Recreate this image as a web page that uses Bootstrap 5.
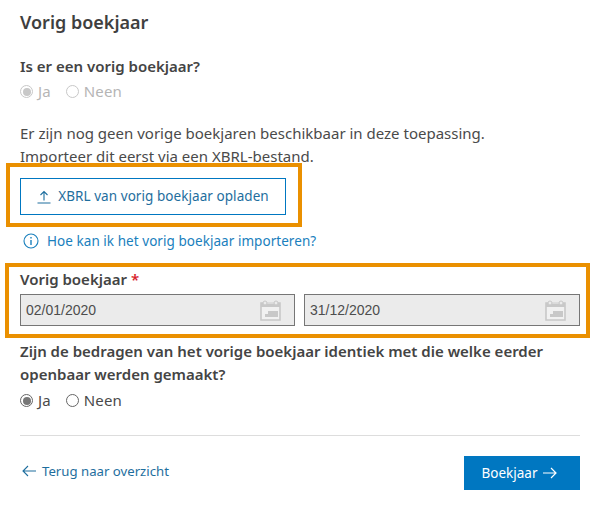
<!DOCTYPE html>
<html lang="nl">
<head>
<meta charset="utf-8">
<title>Vorig boekjaar</title>
<link rel="stylesheet" href="https://cdn.jsdelivr.net/npm/bootstrap@5.3.0/dist/css/bootstrap.min.css">
<style>
html, body { height: 100%; }
body { font-family: "Noto Sans", sans-serif; color: #4a4a4a; background: #fff; font-size: 15px; overflow: hidden; position: relative; }
.page-wrap { width: 560px; margin-left: 20px; padding-top: 10px; }
.page-title { font-size: 18px; font-weight: 600; line-height: 24px; margin: 0 0 21px; color: #3f3f3f; }
.q-label { font-size: 15px; font-weight: 600; line-height: 23px; margin: 0; color: #444; }
.radio-row { height: 25px; gap: 15px; font-size: 15px; line-height: 25px; margin-top: 1px; letter-spacing: .15px; }
.q-block + .radio-row { margin-top: 2px; }
.radio-item { gap: 5px; }
.radio-dot { width: 13px; height: 13px; border-radius: 50%; border: 1px solid #666; background: #fff; display: inline-block; position: relative; flex: none; }
.radio-dot.is-on::after { content: ""; position: absolute; inset: 1.5px; border-radius: 50%; background: #777; }
.radio-row.is-off { color: #b5b5b5; }
.radio-row.is-off .radio-dot { border-color: #c8c8c8; }
.radio-row.is-off .radio-dot.is-on::after { background: #c8c8c8; }
.intro { line-height: 23px; margin: 18px 0 10px; font-size: 15px; }
.upload-btn { width: 266px; height: 37px; border: 1px solid #0077c1; border-radius: 0; background: #fff; color: #1e6e9e; font-size: 13.5px; letter-spacing: .06px; gap: 7px; padding: 0; }
.info-link { color: #1a80bd; text-decoration: none; font-size: 13.5px; letter-spacing: .05px; line-height: 20px; gap: 8px; margin: 16px 0 0 3px; }
.field-label { font-size: 15px; font-weight: 600; line-height: 20px; margin: 18px 0 5px; color: #444; }
.req { color: #d81e2c; }
.date-row { gap: 9px; }
.date-box { flex: 1 1 0; height: 32px; background: #ebebeb; border: 1px solid #767676; font-family: "Liberation Sans", sans-serif; font-size: 14px; color: #4d4d4d; padding: 0 13px 0 5px; }
.date-box.is-first { flex: 0 0 275px; }
.q-block { margin-top: 14px; }
.rule { border: 0; border-top: 1px solid #ddd; opacity: 1; margin: 22px 0 20px; }
.foot-row { align-items: flex-start; }
.back-link { color: #1e6e9e; font-size: 13.2px; text-decoration: none; gap: 6px; line-height: 20px; margin: 5px 0 0 2px; }
.next-btn { width: 116px; height: 34px; border-radius: 0; border: 0; background: #0077c1; color: #fff; font-size: 13.5px; gap: 6px; padding: 0 5px 0 0; }
.hl { position: absolute; border: 4px solid #ea9000; pointer-events: none; }
.hl-a { left: 6px; top: 163px; width: 296px; height: 64px; }
.hl-b { left: 5px; top: 263px; width: 585px; height: 75px; }
</style>
</head>
<body>
<svg width="0" height="0" class="d-block" aria-hidden="true"><defs><symbol id="cal" viewBox="0 0 21 21"><path d="M1 3h19v17H1z" fill="#f1f1f1" stroke="#c8c8c8" stroke-width="1.6"/><path d="M1 3h19v4H1z" fill="#c8c8c8"/><path d="M7 3h7" stroke="#ebebeb" stroke-width="1"/><circle cx="5" cy="3" r="2" fill="#ebebeb" stroke="#c8c8c8"/><circle cx="16" cy="3" r="2" fill="#ebebeb" stroke="#c8c8c8"/><path d="M8 11h10v6H5v-3h3z" fill="#c8c8c8"/></symbol></defs></svg>
<div class="page-wrap">
  <h1 class="page-title">Vorig boekjaar</h1>
  <p class="q-label">Is er een vorig boekjaar?</p>
  <div class="radio-row is-off d-flex align-items-center">
    <span class="radio-item d-flex align-items-center"><span class="radio-dot is-on"></span>Ja</span>
    <span class="radio-item d-flex align-items-center"><span class="radio-dot"></span>Neen</span>
  </div>
  <p class="intro">Er zijn nog geen vorige boekjaren beschikbaar in deze toepassing.<br>Importeer dit eerst via een XBRL-bestand.</p>
  <button type="button" class="btn upload-btn d-flex align-items-center justify-content-center">
    <svg width="14" height="14" viewBox="0 0 14 14" fill="none" stroke="#1e6e9e" stroke-width="1.1"><path d="M7 10.5V1.5M3.5 5L7 1.5L10.5 5M.5 13h13"/></svg>
    XBRL van vorig boekjaar opladen
  </button>
  <a href="#" class="info-link d-flex align-items-center">
    <svg width="16" height="16" viewBox="0 0 16 16" fill="none" stroke="#1a80bd" stroke-width="1.1"><circle cx="8" cy="8" r="7"/><path d="M8 7v5M8 4v1.4" stroke-width="1.4"/></svg>
    Hoe kan ik het vorig boekjaar importeren?
  </a>
  <p class="field-label">Vorig boekjaar <span class="req">*</span></p>
  <div class="date-row d-flex">
    <div class="date-box is-first d-flex align-items-center justify-content-between">02/01/2020
      <svg width="21" height="21"><use href="#cal"/></svg>
    </div>
    <div class="date-box d-flex align-items-center justify-content-between">31/12/2020
      <svg width="21" height="21"><use href="#cal"/></svg>
    </div>
  </div>
  <p class="q-label q-block">Zijn de bedragen van het vorige boekjaar identiek met die welke eerder<br>openbaar werden gemaakt?</p>
  <div class="radio-row d-flex align-items-center">
    <span class="radio-item d-flex align-items-center"><span class="radio-dot is-on"></span>Ja</span>
    <span class="radio-item d-flex align-items-center"><span class="radio-dot"></span>Neen</span>
  </div>
  <hr class="rule">
  <div class="foot-row d-flex justify-content-between">
    <a href="#" class="back-link d-flex align-items-center">
      <svg width="14" height="12" viewBox="0 0 14 12" fill="none" stroke="#1e6e9e" stroke-width="1.1"><path d="M14 6H1M6 1L1 6l5 5"/></svg>
      Terug naar overzicht
    </a>
    <button type="button" class="btn next-btn d-flex align-items-center justify-content-center">Boekjaar
      <svg width="14" height="12" viewBox="0 0 14 12" fill="none" stroke="#fff" stroke-width="1.2"><path d="M0 6h13M8 1l5 5-5 5"/></svg>
    </button>
  </div>
</div>
<div class="hl hl-a"></div>
<div class="hl hl-b"></div>
<script src="https://cdn.jsdelivr.net/npm/bootstrap@5.3.0/dist/js/bootstrap.bundle.min.js"></script>
</body>
</html>
